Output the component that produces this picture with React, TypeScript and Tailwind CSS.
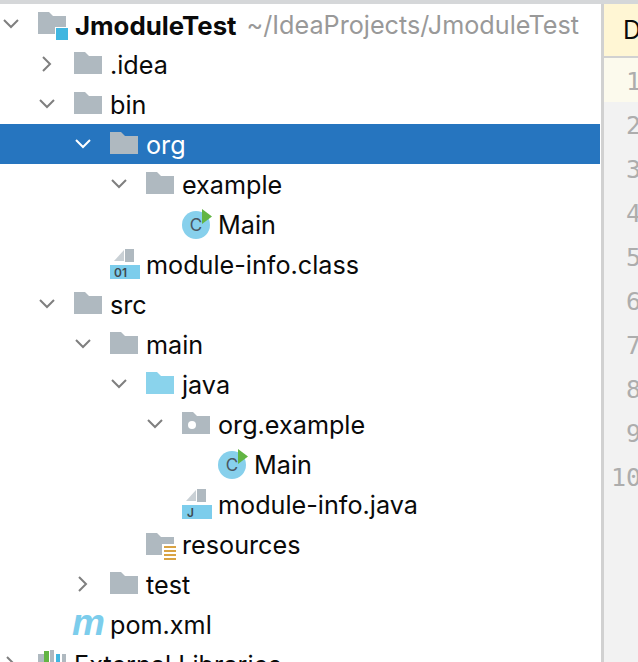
import React from 'react';

const FOLDER = 'M0 0h11l4 4h13v18H0z';

const Chevron = ({ open, white }: { open?: boolean; white?: boolean }) => (
  <svg width="18" height="18" viewBox="0 0 18 18" fill="none" className={white ? 'text-white' : 'text-[#7f7f7f]'}>
    {open ? (
      <path d="M2 5l7 7 7-7" stroke="currentColor" strokeWidth="2" />
    ) : (
      <path d="M5 2l7 7-7 7" stroke="currentColor" strokeWidth="2" />
    )}
  </svg>
);

const Folder = ({ color = '#afb9c0' }: { color?: string }) => (
  <svg width="28" height="22" viewBox="0 0 28 22" className="mb-[2px]">
    <path d={FOLDER} fill={color} />
  </svg>
);

const ProjectIcon = () => (
  <svg width="32" height="30" viewBox="0 0 32 30" className="mt-[6px]">
    <path d={FOLDER} fill="#afb9c0" />
    <rect x="17" y="15" width="14" height="14" fill="#fff" />
    <rect x="18" y="16" width="12" height="12" fill="#40b6e0" />
  </svg>
);

const PackageIcon = () => (
  <svg width="28" height="22" viewBox="0 0 28 22" className="mb-[2px]">
    <path d={FOLDER} fill="#afb9c0" />
    <circle cx="10" cy="13" r="4" fill="#fff" />
  </svg>
);

const ResourcesIcon = () => (
  <svg width="30" height="28" viewBox="0 0 30 28" className="mt-[6px]">
    <path d={FOLDER} fill="#afb9c0" />
    <rect x="16" y="11" width="14" height="17" fill="#fff" />
    <g fill="#d9a343">
      <rect x="18" y="13" width="12" height="2" />
      <rect x="18" y="17" width="12" height="2" />
      <rect x="18" y="21" width="12" height="2" />
      <rect x="18" y="25" width="12" height="2" />
    </g>
  </svg>
);

const ClassIcon = () => (
  <svg width="30" height="30" viewBox="0 0 30 30">
    <circle cx="14" cy="16" r="14" fill="#87d0ec" />
    <text x="14" y="22" textAnchor="middle" fontSize="17" fontWeight="400" fill="#4a5660" fontFamily="Inter, sans-serif">C</text>
    <path d="M20 0l10 7.5L20 15z" fill="#62b543" />
  </svg>
);

const ModuleIcon = ({ label }: { label: string }) => (
  <svg width="30" height="30" viewBox="0 0 30 30">
    <path d="M4 12L14 1v11z" fill="#c9d0d5" />
    <rect x="15" y="0" width="9" height="13" fill="#afb9c0" />
    <rect x="0" y="16" width="30" height="14" fill="#7ccdec" />
    <text x={label === 'J' ? 5 : 4} y="28" fontSize="12" fontWeight="600" fill="#3e4a52" fontFamily="Inter, sans-serif">{label}</text>
  </svg>
);

const MavenIcon = () => (
  <span className="font-['Liberation_Sans',sans-serif] font-bold italic text-[37px] leading-none text-[#7ccdec] -ml-[2px] -mt-[4px]">m</span>
);

const LibrariesIcon = () => (
  <svg width="30" height="24" viewBox="0 0 30 24" className="-mt-[4px]">
    <rect x="0" y="4" width="6" height="20" fill="#afb9c0" />
    <rect x="6" y="1" width="5" height="23" fill="#62b543" />
    <rect x="12" y="0" width="4" height="24" fill="#afb9c0" />
    <rect x="18" y="4" width="4" height="20" fill="#40b6e0" />
    <rect x="24" y="4" width="4" height="20" fill="#afb9c0" />
  </svg>
);

type Row = {
  level: number;
  label: string;
  icon: React.ReactNode;
  chevron?: 'open' | 'closed';
  selected?: boolean;
  bold?: boolean;
  hint?: string;
};

const rows: Row[] = [
  { level: 0, label: 'JmoduleTest', icon: <ProjectIcon />, chevron: 'open', bold: true, hint: '~/IdeaProjects/JmoduleTest' },
  { level: 1, label: '.idea', icon: <Folder />, chevron: 'closed' },
  { level: 1, label: 'bin', icon: <Folder />, chevron: 'open' },
  { level: 2, label: 'org', icon: <Folder />, chevron: 'open', selected: true },
  { level: 3, label: 'example', icon: <Folder />, chevron: 'open' },
  { level: 4, label: 'Main', icon: <ClassIcon /> },
  { level: 2, label: 'module-info.class', icon: <ModuleIcon label="01" /> },
  { level: 1, label: 'src', icon: <Folder />, chevron: 'open' },
  { level: 2, label: 'main', icon: <Folder />, chevron: 'open' },
  { level: 3, label: 'java', icon: <Folder color="#8ad3ec" />, chevron: 'open' },
  { level: 4, label: 'org.example', icon: <PackageIcon />, chevron: 'open' },
  { level: 5, label: 'Main', icon: <ClassIcon /> },
  { level: 4, label: 'module-info.java', icon: <ModuleIcon label="J" /> },
  { level: 3, label: 'resources', icon: <ResourcesIcon /> },
  { level: 2, label: 'test', icon: <Folder />, chevron: 'closed' },
  { level: 1, label: 'pom.xml', icon: <MavenIcon /> },
  { level: 0, label: 'External Libraries', icon: <LibrariesIcon />, chevron: 'closed' },
];

const lineNumbers = [1, 2, 3, 4, 5, 6, 7, 8, 9, 10];

const App: React.FC = () => {
  return (
    <div className="w-[638px] h-[662px] overflow-hidden bg-white flex flex-col font-['Inter',sans-serif]">
      <div className="h-[4px] shrink-0 bg-[#d5d7d9]" />
      <div className="flex flex-1 min-h-0">
        {/* Project tree */}
        <div className="w-[601px] shrink-0">
          {rows.map((row, i) => (
            <div
              key={i}
              className={`h-10 mr-[1px] flex items-center text-[25.2px] whitespace-nowrap ${
                row.selected ? 'bg-[#2675bf] text-white' : 'text-[#0a0a0a]'
              }`}
              style={{ paddingLeft: row.level * 36 }}
            >
              <div className="w-[38px] shrink-0 pl-[2px] flex items-center">
                {row.chevron && <Chevron open={row.chevron === 'open'} white={row.selected} />}
              </div>
              <div className="w-[36px] shrink-0 flex items-center">{row.icon}</div>
              <span className={`pt-[4px] ${row.bold ? 'font-bold text-[25.8px] ml-[1px]' : ''}`}>{row.label}</span>
              {row.hint && <span className="pt-[4px] ml-[10px] text-[#999999]">{row.hint}</span>}
            </div>
          ))}
        </div>

        {/* Editor gutter */}
        <div className="flex-1 border-l-[3px] border-[#d1d1d1] bg-[#f2f2f2] overflow-hidden">
          <div className="h-[54px] bg-[#fff6d4] border-b-[2px] border-[#d1d1d1] flex items-center pl-[19px] pt-[2px] text-[25px] text-[#0a0a0a]">D</div>
          {lineNumbers.map(n => (
            <div
              key={n}
              className={`h-[44px] w-[37px] pt-[4px] flex items-center justify-end text-[25px] text-[#adadad] font-['DejaVu_Sans_Mono',monospace] ${
                n === 1 ? 'bg-[#fcfaed]' : ''
              }`}
            >
              {n}
            </div>
          ))}
        </div>
      </div>
    </div>
  );
};

export default App;
